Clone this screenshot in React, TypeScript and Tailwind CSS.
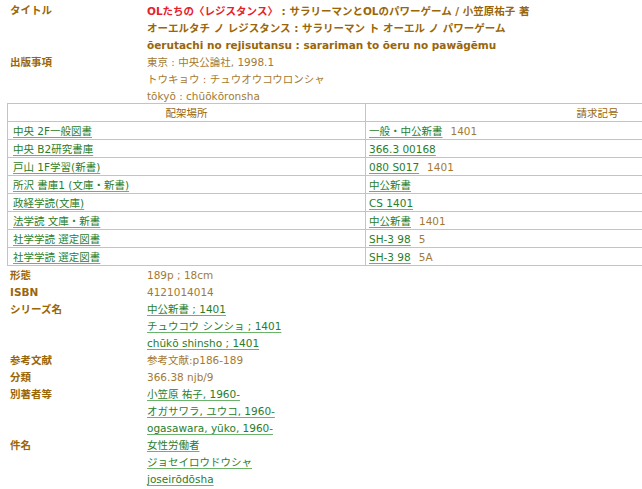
import React from "react";

const L = "text-[#2a7d2a] underline decoration-[#6bb36b] underline-offset-2";

function Field({ label, children, bold = true }: { label: string; children: React.ReactNode; bold?: boolean }) {
  return (
    <div className="grid grid-cols-[137px_1fr]">
      <div className={`${bold ? "font-bold" : ""} text-[#9a6608]`}>{label}</div>
      <div className="flex flex-col">{children}</div>
    </div>
  );
}

const rows: [string, string, string][] = [
  ["中央 2F一般図書", "一般・中公新書", "1401"],
  ["中央 B2研究書庫", "366.3 00168", ""],
  ["戸山 1F学習(新書)", "080 S017", "1401"],
  ["所沢 書庫1 (文庫・新書)", "中公新書", ""],
  ["政経学読(文庫)", "CS 1401", ""],
  ["法学読 文庫・新書", "中公新書", "1401"],
  ["社学学読 選定図書", "SH-3 98", "5"],
  ["社学学読 選定図書", "SH-3 98", "5A"],
];

export default function App() {
  return (
    <div
      className="w-[642px] h-[489px] overflow-hidden bg-white text-[10.5px] leading-[17px] text-[#a47a32]"
      style={{ fontFamily: '"DejaVu Sans", "Noto Sans CJK JP", sans-serif' }}
    >
      <div className="pl-[10px] pt-[2px]">
        <Field label="タイトル">
          <div className="font-bold text-[#9a6608] leading-[18px]">
            <span className="text-[#e8202a]">OLたちの〈レジスタンス〉</span> : サラリーマンとOLのパワーゲーム / 小笠原祐子 著
          </div>
          <div className="font-bold text-[#9a6608]">オーエルタチ ノ レジスタンス : サラリーマン ト オーエル ノ パワーゲーム</div>
          <div className="font-bold text-[#9a6608]">ōerutachi no rejisutansu : sarariman to ōeru no pawāgēmu</div>
        </Field>
        <Field label="出版事項">
          <div>東京 : 中央公論社, 1998.1</div>
          <div>トウキョウ : チュウオウコウロンシャ</div>
          <div>tōkyō : chūōkōronsha</div>
        </Field>
      </div>
      <div className="ml-[7px] mt-[-2px]">
        <table className="border-collapse w-[822px] table-fixed">
          <colgroup>
            <col className="w-[358px]" />
            <col className="w-[464px]" />
          </colgroup>
          <thead>
            <tr className="h-[18px]">
              <th className="border border-[#c4c4c4] font-normal text-[#9a6608] text-center leading-[16px]">配架場所</th>
              <th className="border border-[#c4c4c4] font-normal text-[#9a6608] text-center leading-[16px]">請求記号</th>
            </tr>
          </thead>
          <tbody>
            {rows.map((r, i) => (
              <tr key={i} className="h-[18px]">
                <td className="border border-[#c4c4c4] px-[5px] leading-[16px]">
                  <span className={L}>{r[0]}</span>
                </td>
                <td className="border border-[#c4c4c4] px-[3px] leading-[16px]">
                  <span className={L}>{r[1]}</span>
                  {r[2] && <span className="ml-[8px]">{r[2]}</span>}
                </td>
              </tr>
            ))}
          </tbody>
        </table>
      </div>
      <div className="pl-[10px] pt-[1px]">
        <Field label="形態">
          <div>189p ; 18cm</div>
        </Field>
        <Field label="ISBN">
          <div>4121014014</div>
        </Field>
        <Field label="シリーズ名">
          <div><span className={L}>中公新書 ; 1401</span></div>
          <div><span className={L}>チュウコウ シンショ ; 1401</span></div>
          <div><span className={L}>chūkō shinsho ; 1401</span></div>
        </Field>
        <Field label="参考文献">
          <div>参考文献:p186-189</div>
        </Field>
        <Field label="分類">
          <div>366.38 njb/9</div>
        </Field>
        <Field label="別著者等">
          <div><span className={L}>小笠原 祐子, 1960-</span></div>
          <div><span className={L}>オガサワラ, ユウコ, 1960-</span></div>
          <div><span className={L}>ogasawara, yūko, 1960-</span></div>
        </Field>
        <Field label="件名">
          <div><span className={L}>女性労働者</span></div>
          <div><span className={L}>ジョセイロウドウシャ</span></div>
          <div><span className={L}>joseirōdōsha</span></div>
        </Field>
      </div>
    </div>
  );
}
